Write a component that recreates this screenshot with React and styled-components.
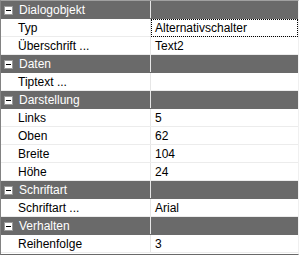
import React from "react";
import styled, { createGlobalStyle } from "styled-components";

const Global = createGlobalStyle`
  html, body {
    margin: 0;
    padding: 0;
    background: #ffffff;
  }
  body {
    font-family: "Liberation Sans", Arial, sans-serif;
    font-size: 12px;
  }
`;

const Grid = styled.div`
  width: 299px;
  height: 255px;
  box-sizing: border-box;
  border-top: 1px solid #a0a0a0;
  border-left: 1px solid #828282;
  border-right: 1px solid #f0f0f0;
  border-bottom: 1px solid #696969;
  padding-bottom: 1px;
  background: #ffffff;
  display: flex;
  flex-direction: column;
`;

const Row = styled.div`
  display: flex;
  height: 18px;
  box-sizing: border-box;
  background: ${(p) => (p.$header ? "#6a6a6a" : "#ffffff")};
  color: ${(p) => (p.$header ? "#ffffff" : "#000000")};
  border-bottom: 1px solid ${(p) => (p.$header ? "#6a6a6a" : "#ececec")};
`;

const Label = styled.div`
  position: relative;
  width: 150px;
  flex: none;
  display: flex;
  align-items: center;
  padding-left: ${(p) => (p.$header ? "18px" : "17px")};
  box-sizing: border-box;
  border-right: 1px solid #e6e6e6;
  white-space: nowrap;
`;

const Value = styled.div`
  flex: 1;
  display: flex;
  align-items: center;
  padding-left: 3px;
  box-sizing: border-box;
  border: 1px ${(p) => (p.$focus ? "dotted #000000" : "solid transparent")};
  margin-bottom: ${(p) => (p.$focus ? "-1px" : "0")};
  white-space: nowrap;
`;

const Toggle = styled.span`
  position: absolute;
  left: 3px;
  top: 5px;
  width: 9px;
  height: 9px;
  box-sizing: border-box;
  background: #ffffff;
  border: 1px solid #9a9a9a;

  &::after {
    content: "";
    position: absolute;
    left: 1px;
    top: 3px;
    width: 5px;
    height: 1px;
    background: #000000;
  }
`;

const sections = [
  {
    title: "Dialogobjekt",
    items: [
      ["Typ", "Alternativschalter", true],
      ["Überschrift ...", "Text2"],
    ],
  },
  { title: "Daten", items: [["Tiptext ...", ""]] },
  {
    title: "Darstellung",
    items: [
      ["Links", "5"],
      ["Oben", "62"],
      ["Breite", "104"],
      ["Höhe", "24"],
    ],
  },
  { title: "Schriftart", items: [["Schriftart ...", "Arial"]] },
  { title: "Verhalten", items: [["Reihenfolge", "3"]] },
];

export default function App() {
  return (
    <>
      <Global />
      <Grid>
        {sections.map((s) => (
          <React.Fragment key={s.title}>
            <Row $header>
              <Label $header>
                <Toggle />
                {s.title}
              </Label>
              <Value />
            </Row>
            {s.items.map(([name, value, focus]) => (
              <Row key={name}>
                <Label>{name}</Label>
                <Value $focus={focus}>{value}</Value>
              </Row>
            ))}
          </React.Fragment>
        ))}
      </Grid>
    </>
  );
}
